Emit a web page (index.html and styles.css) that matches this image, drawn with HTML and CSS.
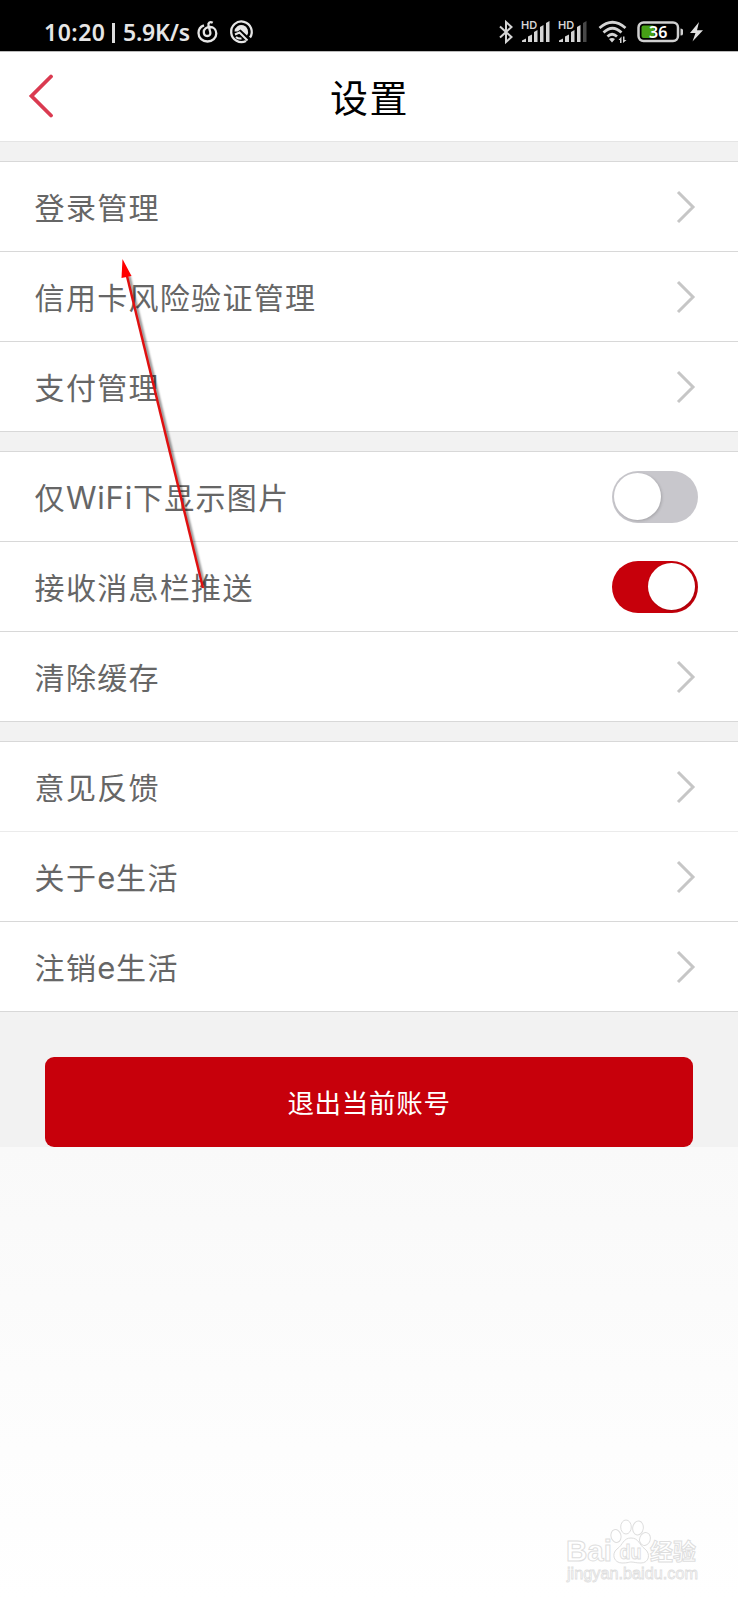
FILE: index.html
```html
<!DOCTYPE html>
<html lang="zh-CN">
<head>
<meta charset="utf-8">
<title>设置</title>
<link rel="stylesheet" href="styles.css">
</head>
<body>
<svg class="defs" aria-hidden="true">
  <symbol id="chevron" viewBox="0 0 20 36"><path d="M2 3 L17 18 L2 33"/></symbol>
</svg>
<div class="screen">
  <div class="status">
    <span class="clock">10:20</span>
    <span class="bar"></span>
    <span class="speed">5.9K/s</span>
    <svg class="music" width="22" height="24" viewBox="0 0 22 24"><path d="M7 5.300 C3.500 6.500 1.500 9.500 1.500 13 C1.500 18 5.500 21.500 10.500 21.500 C15.500 21.500 19.300 18 19.300 13.500 C19.300 9.500 16.500 7 13 7 C9.500 7 6.800 9 6.800 12 C6.800 14.500 8.300 16 10.200 16 C12.700 16 13.700 14.300 13.300 12.300 L11.500 5.500 C10.800 2.500 13.200 1.300 15.700 2.800"/></svg>
    <svg class="app" width="24" height="24" viewBox="0 0 24 24"><path class="ring" d="M17 21 A10.300 10.300 0 1 1 21 17.500"/><path class="fill" d="M5.500 11.500 A6.800 6.800 0 1 1 18 15.500 L11.500 9.500 L8.500 11.500 Z"/><path class="ring thin" d="M6 14.500 L10.500 12.500 L18.500 20.500 M7 17 Q9 19 12.500 18.500"/></svg>
    <span class="spacer"></span>
    <svg class="bt" width="16" height="24" viewBox="0 0 16 24"><path d="M2 6.500 L13.500 17 L8 22 V2 L13.500 7 L2 17.500"/></svg>
    <svg class="signal" width="31" height="24" viewBox="0 0 31 24"><text x="0" y="9">HD</text><path d="M1 22 V20.500 L5 18.500 V22 Z M7 22 V16.500 L11 14.500 V22 Z M13 22 V12 L16.500 10 V22 Z M19 22 V7 L22.500 5 V22 Z M25 22 V3 L28.500 1 V22 Z"/></svg>
    <svg class="signal second" width="31" height="24" viewBox="0 0 31 24"><text x="0" y="9">HD</text><path d="M1 22 V20.500 L5 18.500 V22 Z M7 22 V16.500 L11 14.500 V22 Z M13 22 V12 L16.500 10 V22 Z M19 22 V7 L22.500 5 V22 Z"/><path class="dim" d="M25 22 V3 L28.500 1 V22 Z"/></svg>
    <svg class="wifi" width="30" height="24" viewBox="0 0 30 24"><path d="M1.500 8 Q14.500 -3.500 27.500 8 M5.500 12.500 Q14.500 4 23.500 12.500 M9.500 16.500 Q14 12 19 16.500"/><path class="fill" d="M11 19 Q14 17 17 19 L14 22.500 Z M20.500 20 L23.500 16.500 V23 H22 V20 Z M25 16.500 H26.500 V20 H28.500 L25 23 Z"/></svg>
    <svg class="battery" width="47" height="22" viewBox="0 0 47 22"><rect class="case" x="1.500" y="1.500" width="39.500" height="18.500" rx="5"/><rect class="charge" x="4.500" y="4.500" width="13" height="12.500" rx="2"/><path class="cap" d="M43.500 7.500 Q46 7.500 46 9 V13 Q46 14.500 43.500 14.500 Z"/><text x="12" y="16.500">36</text></svg>
    <svg class="bolt" width="13" height="20" viewBox="0 0 13 20"><path d="M9 0 L0 11 H5.500 L2.500 19.500 L13 8.300 H7 Z"/></svg>
  </div>
  <header class="header">
    <svg class="back" width="26" height="44" viewBox="0 0 26 44"><path d="M23 2.500 L3.500 22 L23 41.500"/></svg>
    <h1>设置</h1>
  </header>
  <main>
    <section class="group">
      <div class="row"><span>登录管理</span><svg class="chev"><use href="#chevron"/></svg></div>
      <div class="row"><span>信用卡风险验证管理</span><svg class="chev"><use href="#chevron"/></svg></div>
      <div class="row"><span>支付管理</span><svg class="chev"><use href="#chevron"/></svg></div>
    </section>
    <section class="group">
      <div class="row"><span>仅<span class="latin">WiFi</span>下显示图片</span><i class="toggle"></i></div>
      <div class="row"><span>接收消息栏推送</span><i class="toggle on"></i></div>
      <div class="row"><span>清除缓存</span><svg class="chev"><use href="#chevron"/></svg></div>
    </section>
    <section class="group">
      <div class="row light"><span>意见反馈</span><svg class="chev"><use href="#chevron"/></svg></div>
      <div class="row"><span>关于<span class="latin">e</span>生活</span><svg class="chev"><use href="#chevron"/></svg></div>
      <div class="row"><span>注销<span class="latin">e</span>生活</span><svg class="chev"><use href="#chevron"/></svg></div>
    </section>
    <button class="logout">退出当前账号</button>
  </main>
  <div class="rest"></div>
  <svg class="arrow" width="110" height="345" viewBox="0 0 110 345">
    <g class="shadow"><path d="M9 20 L84.500 331"/></g>
    <path class="line" d="M6.500 18 L83 332"/>
    <path class="head" d="M2.500 3 L11.500 20 L1.500 22 Z"/>
  </svg>
  <svg class="mark" width="150" height="70" viewBox="0 0 150 70">
    <text class="brand" x="1" y="41" textLength="46" lengthAdjust="spacingAndGlyphs">Bai</text>
    <g><ellipse cx="51" cy="16" rx="5" ry="6.500" transform="rotate(-15 51 16)"/><ellipse cx="61" cy="7" rx="5.300" ry="7"/><ellipse cx="73" cy="8" rx="5.300" ry="7" transform="rotate(8 73 8)"/><ellipse cx="80" cy="19" rx="5.300" ry="6.500" transform="rotate(20 80 19)"/><path d="M66 18 C58 18 58 25 52 29 C46 34 49 43 57 43 C63 43 64 42 66 42 C69 42 71 43 76 43 C84 43 86 34 80 29 C74 25 74 18 66 18 Z"/></g>
    <text class="du" x="54.500" y="39" textLength="22" lengthAdjust="spacingAndGlyphs">du</text>
    <text class="cn" x="85" y="39.500" textLength="46" lengthAdjust="spacingAndGlyphs">经验</text>
    <text class="url" x="2" y="59" textLength="131" lengthAdjust="spacingAndGlyphs">jingyan.baidu.com</text>
  </svg>
</div>
</body>
</html>
```
FILE: styles.css
```css
* { box-sizing: border-box; }
body { margin: 0; background: #fff; }
.defs { position: absolute; width: 0; height: 0; }
.screen {
  position: relative;
  display: flex;
  flex-direction: column;
  width: 738px;
  height: 1600px;
  overflow: hidden;
  font-family: Inter, "Noto Sans CJK SC", sans-serif;
}

/* status bar */
.status {
  display: flex;
  align-items: flex-start;
  height: 52px;
  padding: 20px 35px 0 44px;
  background: #000;
  border-bottom: 1px solid #bbb;
  color: #e6e6e6;
}
.status svg { display: block; flex: none; overflow: visible; }
.clock, .speed { font: 600 23px/25px "Noto Sans", sans-serif; white-space: nowrap; }
.clock { width: 68px; letter-spacing: .5px; }
.bar { width: 3px; height: 20px; margin-top: 3px; background: #ddd; }
.speed { width: 74px; margin-left: 8px; letter-spacing: -.2px; }
.music { fill: none; stroke: #e6e6e6; stroke-width: 2.300; }
.app { margin-left: 10px; }
.app .ring { fill: none; stroke: #e6e6e6; stroke-width: 2.300; }
.app .fill { fill: #e6e6e6; }
.app .thin { stroke-width: 2; }
.spacer { flex: 1; }
.bt { fill: none; stroke: #d4d4d4; stroke-width: 2; }
.signal { margin-left: 7px; fill: #d4d4d4; }
.signal text { font: 600 11px Inter, sans-serif; }
.signal.second { margin-left: 6px; }
.dim { fill: #484848; }
.wifi { margin-left: 9px; fill: none; stroke: #d4d4d4; stroke-width: 2.700; }
.wifi .fill { fill: #d4d4d4; stroke: none; }
.battery { margin: 1px 0 0 9px; }
.case { fill: none; stroke: #d0d0d0; stroke-width: 2.500; }
.charge { fill: #46a016; }
.cap { fill: #d0d0d0; }
.battery text { fill: #fff; font: 600 16px "Noto Sans", sans-serif; }
.bolt { margin: 2px 0 0 6px; fill: #e0e0e0; }

/* title bar */
.header {
  display: grid;
  grid-template-columns: 302px auto;
  align-items: center;
  height: 90px;
  padding-left: 28px;
  border-bottom: 1px solid #e5e5e5;
  background: #fff;
}
.back { margin-top: -1px; fill: none; stroke: #da3a50; stroke-width: 3.800; stroke-linecap: round; }
h1 { margin: -2px 0 0; font: 400 38px/56px "Noto Sans CJK SC", sans-serif; letter-spacing: 1.500px; color: #000; }

/* settings list */
main { height: 1005px; background: #f2f2f2; }
.group { padding-top: 19px; }
.row {
  display: flex;
  align-items: center;
  justify-content: space-between;
  height: 90px;
  padding: 0 40px 0 34.600px;
  background: #fff;
  border-bottom: 1px solid #d8d8d8;
  color: #666;
  font-size: 30px;
  line-height: 44px;
  letter-spacing: 1.300px;
}
.row > span { padding-top: 2px; }
.row:first-child { height: 91px; border-top: 1px solid #d8d8d8; }
.row.light { border-bottom-color: #ebebeb; }
.latin { font-size: 31px; line-height: 1; letter-spacing: .8px; }
.chev { width: 20px; height: 36px; margin-right: 2.500px; fill: none; stroke: #c6c6c6; stroke-width: 3; }
.toggle {
  width: 86px;
  height: 52px;
  border-radius: 26px;
  background: #c8c7cc;
}
.toggle::before {
  content: "";
  display: block;
  width: 47px;
  height: 47px;
  margin: 2.500px 2px;
  border-radius: 50%;
  background: #fff;
  box-shadow: 1px 1px 3px rgba(0, 0, 0, .18);
}
.toggle.on { background: #c7000b; }
.toggle.on::before { margin-left: 36px; }
.logout {
  display: block;
  width: 648px;
  height: 90px;
  margin: 45px auto 0;
  border: 0;
  border-radius: 9px;
  background: #c7000b;
  color: #fff;
  font: 400 26.500px/38px "Noto Sans CJK SC", sans-serif;
  letter-spacing: .7px;
}
.rest { flex: 1; background: linear-gradient(#f9f9f9, #fff); }

/* annotation and watermark, drawn over the page */
.arrow { position: absolute; left: 120px; top: 256px; }
.arrow .line { fill: none; stroke: #e01010; stroke-width: 2.500; }
.arrow .head { fill: #f00; }
.shadow { fill: none; stroke: rgba(0, 0, 0, .5); stroke-width: 2.500; filter: blur(1.300px); }
.mark { position: absolute; left: 565px; top: 1520px; overflow: visible; fill: #fff; stroke: #dedede; stroke-width: 1; }
.mark .brand { font: 700 29px "Liberation Sans", sans-serif; }
.mark .du { font: 700 21px "Liberation Sans", sans-serif; }
.mark .cn { font: 700 23px "Noto Sans CJK SC", sans-serif; }
.mark .url { font: 400 16px "Liberation Sans", sans-serif; stroke-width: .8; }
```
